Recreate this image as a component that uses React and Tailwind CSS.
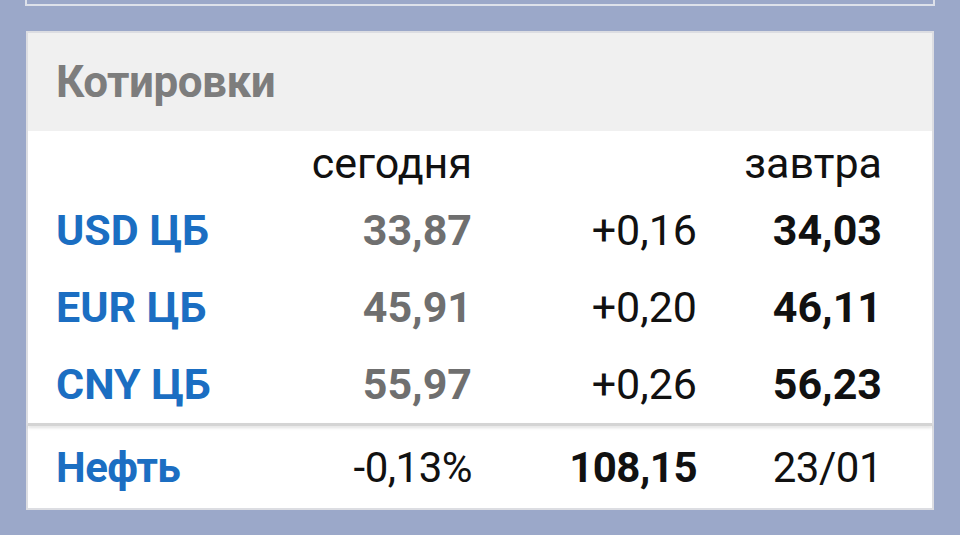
import React from 'react';

const rows = [
  { name: 'USD ЦБ', today: '33,87', diff: '+0,16', tomorrow: '34,03' },
  { name: 'EUR ЦБ', today: '45,91', diff: '+0,20', tomorrow: '46,11' },
  { name: 'CNY ЦБ', today: '55,97', diff: '+0,26', tomorrow: '56,23' },
];

const cols = 'grid grid-cols-[216px_200px_225px_185px] items-center';

export default function App() {
  return (
    <div
      className="w-[960px] h-[535px] bg-[#9ba8c9] overflow-hidden"
      style={{ fontFamily: 'Roboto, "Noto Sans", sans-serif' }}
    >
      {/* Previous card edge */}
      <div className="mx-[25px] h-[6px] border-x-2 border-b-2 border-[#dde1ea]" />

      {/* Quotes card */}
      <div className="mx-[26px] mt-[25px] bg-white border-2 border-[#dcdde2]">
        <div className="h-[98px] bg-[#f0f0f0] flex items-center pl-[28px]">
          <span className="text-[44px] font-bold text-[#7d7d7d] tracking-[-0.5px]">Котировки</span>
        </div>

        <div className="pl-[28px]">
          <div className={`${cols} h-[61px] text-[43px] text-[#111]`}>
            <span />
            <span className="text-right">сегодня</span>
            <span />
            <span className="text-right">завтра</span>
          </div>
          {rows.map((r) => (
            <div key={r.name} className={`${cols} h-[77px] text-[43px]`}>
              <span className="font-bold text-[#1b6ec2]">{r.name}</span>
              <span className="text-right font-bold text-[#6f6f6f]">{r.today}</span>
              <span className="text-right text-[#111]">{r.diff}</span>
              <span className="text-right font-bold text-[#111]">{r.tomorrow}</span>
            </div>
          ))}
        </div>

        <div className="h-[3px] bg-[#d4d4d4] shadow-[0_2px_3px_rgba(0,0,0,0.12)]" />

        <div className={`${cols} pl-[28px] h-[82px] text-[42px] tracking-[-0.5px]`}>
          <span className="font-bold text-[#1b6ec2]">Нефть</span>
          <span className="text-right text-[#111]">-0,13%</span>
          <span className="text-right font-bold text-[#111]">108,15</span>
          <span className="text-right text-[#111]">23/01</span>
        </div>
      </div>
    </div>
  );
}
